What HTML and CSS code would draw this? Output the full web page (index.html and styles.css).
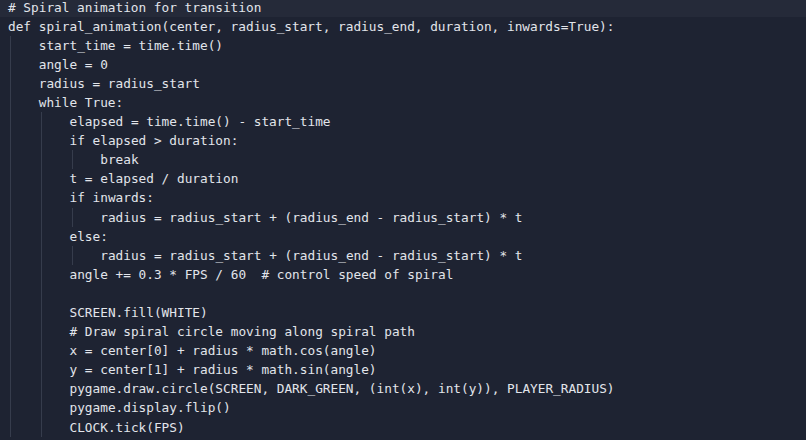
FILE: index.html
```html
<!DOCTYPE html>
<html>
<head>
<meta charset="utf-8">
<link rel="stylesheet" href="styles.css">
</head>
<body>
<div class="code">
<div class="line current"><span class="txt"># Spiral animation for transition</span></div>
<div class="line"><span class="txt">def spiral_animation(center, radius_start, radius_end, duration, inwards=True):</span></div>
<div class="line"><span class="ind"></span><span class="txt">start_time = time.time()</span></div>
<div class="line"><span class="ind"></span><span class="txt">angle = 0</span></div>
<div class="line"><span class="ind"></span><span class="txt">radius = radius_start</span></div>
<div class="line"><span class="ind"></span><span class="txt">while True:</span></div>
<div class="line"><span class="ind"></span><span class="ind"></span><span class="txt">elapsed = time.time() - start_time</span></div>
<div class="line"><span class="ind"></span><span class="ind"></span><span class="txt">if elapsed &gt; duration:</span></div>
<div class="line"><span class="ind"></span><span class="ind"></span><span class="ind"></span><span class="txt">break</span></div>
<div class="line"><span class="ind"></span><span class="ind"></span><span class="txt">t = elapsed / duration</span></div>
<div class="line"><span class="ind"></span><span class="ind"></span><span class="txt">if inwards:</span></div>
<div class="line"><span class="ind"></span><span class="ind"></span><span class="ind"></span><span class="txt">radius = radius_start + (radius_end - radius_start) * t</span></div>
<div class="line"><span class="ind"></span><span class="ind"></span><span class="txt">else:</span></div>
<div class="line"><span class="ind"></span><span class="ind"></span><span class="ind"></span><span class="txt">radius = radius_start + (radius_end - radius_start) * t</span></div>
<div class="line"><span class="ind"></span><span class="ind"></span><span class="txt">angle += 0.3 * FPS / 60  # control speed of spiral</span></div>
<div class="line"><span class="ind"></span><span class="ind"></span><span class="txt"></span></div>
<div class="line"><span class="ind"></span><span class="ind"></span><span class="txt">SCREEN.fill(WHITE)</span></div>
<div class="line"><span class="ind"></span><span class="ind"></span><span class="txt"># Draw spiral circle moving along spiral path</span></div>
<div class="line"><span class="ind"></span><span class="ind"></span><span class="txt">x = center[0] + radius * math.cos(angle)</span></div>
<div class="line"><span class="ind"></span><span class="ind"></span><span class="txt">y = center[1] + radius * math.sin(angle)</span></div>
<div class="line"><span class="ind"></span><span class="ind"></span><span class="txt">pygame.draw.circle(SCREEN, DARK_GREEN, (int(x), int(y)), PLAYER_RADIUS)</span></div>
<div class="line"><span class="ind"></span><span class="ind"></span><span class="txt">pygame.display.flip()</span></div>
<div class="line"><span class="ind"></span><span class="ind"></span><span class="txt">CLOCK.tick(FPS)</span></div>
</div>
</body>
</html>
```
FILE: styles.css
```css
html, body {
  margin: 0;
  padding: 0;
  background: #1e2332;
  height: 100%;
  overflow: hidden;
}
.code {
  margin-top: -2.5px;
  font-family: "DejaVu Sans Mono", monospace;
  font-size: 12.75px;
  line-height: 19.1px;
  color: #e2e5eb;
}
.line {
  display: flex;
  height: 19.1px;
  padding-left: 8px;
  white-space: pre;
}
.line.current {
  background: #252a39;
}
.ind {
  flex: none;
  width: 30.75px;
  height: 19.1px;
  box-sizing: border-box;
  background: linear-gradient(#363c4c, #363c4c) no-repeat 2px 0 / 1px 100%;
}
.txt {
  flex: none;
}
```
